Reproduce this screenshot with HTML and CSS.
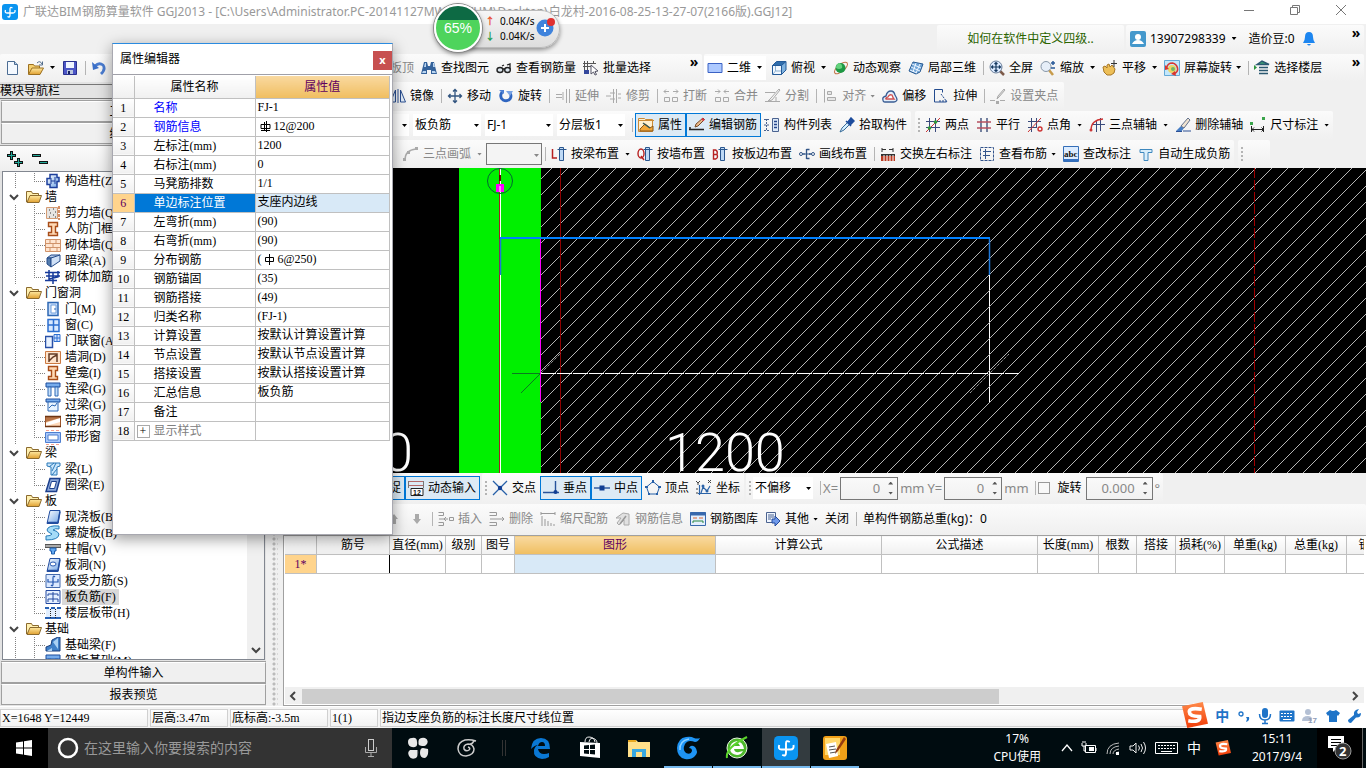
FILE: index.html
```html
<!DOCTYPE html>
<html lang="zh-CN">
<head>
<meta charset="utf-8">
<title>广联达BIM钢筋算量软件 GGJ2013</title>
<link rel="stylesheet" href="styles.css">
</head>
<body>
<svg class="defs" aria-hidden="true">
<defs>
<linearGradient id="gb" x1="0" y1="0" x2="1" y2="1"><stop offset="0" stop-color="#fff"/><stop offset="1" stop-color="#6fa4e6"/></linearGradient>
<linearGradient id="gy" x1="0" y1="0" x2="0" y2="1"><stop offset="0" stop-color="#ffe9a0"/><stop offset="1" stop-color="#e0a030"/></linearGradient>
<linearGradient id="go" x1="0" y1="0" x2="0" y2="1"><stop offset="0" stop-color="#ff8a4a"/><stop offset="1" stop-color="#f03c08"/></linearGradient>
</defs>
<symbol id="logo" viewBox="0 0 16 16"><rect width="16" height="16" rx="3" fill="#0a94f0"/><path d="M10.500 4Q8 2.500 8 5v6q0 3-2.500 1.500M3.500 6q-1 3 1.500 3h6q2.500 0 2-3" fill="none" stroke="#fff" stroke-width="1.300"/></symbol>
<symbol id="new" viewBox="0 0 16 16"><path d="M2.500 1.500h7l3 3v10h-10z" fill="#f4f9ff" stroke="#4b6c93"/><path d="M9.500 1.500v3h3" fill="#b8d0ec" stroke="#4b6c93"/></symbol>
<symbol id="open" viewBox="0 0 16 16"><path d="M.5 14V4.500h5l1 1.500h5v3" fill="#f4cf70" stroke="#9c7020"/><path d="M.5 14.500 4 8h11.500L12 14.500z" fill="url(#gy)" stroke="#9c7020"/><path d="M9 3q3-3 5 1M14.500 1.500V5H11" fill="none" stroke="#526d8c"/></symbol>
<symbol id="save" viewBox="0 0 16 16"><path d="M1.500 1.500h13v13h-13z" fill="#4c56c6" stroke="#2a318f"/><path d="M4 2h8v6H4z" fill="#f0f5ff"/><path d="M5 10h6v4H5z" fill="#b9c5df"/><path d="M6 11h2v3H6z" fill="#17205f"/></symbol>
<symbol id="undo" viewBox="0 0 16 16"><path d="M4 6q4-4 8-1 3 4-2 9" fill="none" stroke="#4a7cd0" stroke-width="2.800"/><path d="M1 2l1 8 6-2z" fill="#3c70c8"/></symbol>
<symbol id="binoc" viewBox="0 0 16 16"><path d="M3 2h3l1 4h2l1-4h3l3 12h-6v-4H6v4H0z" fill="#34629b"/><path d="M2 11h3v2H1zm9 0h3l1 2h-4zM4 3h1v4H3zm8 0h1l1 4h-2z" fill="#b9d4f0"/></symbol>
<symbol id="glasses" viewBox="0 0 16 16"><ellipse cx="4" cy="10" rx="3" ry="2.500" fill="#dce6ee" stroke="#222" stroke-width="1.400"/><ellipse cx="11.500" cy="10" rx="2.800" ry="2.500" fill="#dce6ee" stroke="#222" stroke-width="1.400"/><path d="M7 9h2M6 6l2-1M14 9V4l-3 1" fill="none" stroke="#222" stroke-width="1.300"/></symbol>
<symbol id="batch" viewBox="0 0 16 16"><path d="M1.500 1v13M4.500 1v13M0 3.500h13M0 6.500h8M10.500 1v3" fill="none" stroke="#555"/><path d="M1 10h5v4H1z" fill="#33469b"/><path d="M8 5l7 6-3 .5 1.500 3-1.500.5-1.500-3L8 14z" fill="#fff" stroke="#556"/></symbol>
<symbol id="rect2d" viewBox="0 0 16 16"><path d="M1 3.500h14v9H1z" fill="#adc9ff" stroke="#3b62c4"/></symbol>
<symbol id="cube" viewBox="0 0 16 16"><path d="M1.500 5.500h9v9h-9z" fill="#f2f8ff" stroke="#235a98"/><path d="M1.500 5.500 5.500 1.500h9.500l-4.500 4z" fill="#2f6dac" stroke="#235a98"/><path d="M10.500 5.500 15 1.500V10l-4.500 4.500z" fill="#7fb2df" stroke="#235a98"/><path d="M4.500 6v5L2 14M5 11h5" stroke="#8bb0d0" fill="none"/></symbol>
<symbol id="orbit" viewBox="0 0 16 16"><ellipse cx="8" cy="8" rx="8" ry="3.500" transform="rotate(-40 8 8)" fill="none" stroke="#c2774b"/><circle cx="7.500" cy="8" r="5" fill="#1d9844"/><path d="M6 3q4 1 3 5-3 2-6 0 0-4 3-5z" fill="#64d27c"/></symbol>
<symbol id="local3d" viewBox="0 0 16 16"><path d="M1 11 5 2l10 2-3 8-4 2z" fill="#72a6d8" stroke="#275a92"/><path d="M4 4l9 4M3 7l9 4M2 10l7 3M8 3 5 12M12 4 8 13" fill="none" stroke="#eaf4ff"/></symbol>
<symbol id="full" viewBox="0 0 16 16"><path d="M11 11l4 4" stroke="#7c5a49" stroke-width="2.500"/><circle cx="7" cy="7" r="6" fill="#dceaff" stroke="#6b7f9a"/><path d="M7 2.500v9M2.500 7h9M5.500 4 7 2.500 8.500 4M5.500 10 7 11.500 8.500 10M4 5.500 2.500 7 4 8.500M10 5.500 11.500 7 10 8.500" fill="none" stroke="#16395f" stroke-width="1.200"/></symbol>
<symbol id="zoomi" viewBox="0 0 16 16"><path d="M9 10l4 5" stroke="#c79b4a" stroke-width="2.500"/><circle cx="6" cy="6.500" r="5" fill="#e6eef8" stroke="#8797a8"/><path d="M13 1v4M11 3h4M11 8h4" stroke="#2a5a98" stroke-width="1.500"/></symbol>
<symbol id="pan" viewBox="0 0 16 16"><path d="M1 7l2-1 2 2V5l2-1 1 3 2-2 3 4-1 4-3 2H5L2 12z" fill="#edbf58" stroke="#a87725"/><path d="M12 0v7M9 3.500h6" stroke="#333"/></symbol>
<symbol id="scrrot" viewBox="0 0 16 16"><path d="M.5.500h15v15H.5z" fill="#c3e7fb" stroke="#64a9d7"/><circle cx="8" cy="9" r="4" fill="#edd565"/><path d="M2.500 8q1-5 6-5 4 1 5 5t-4 6" fill="none" stroke="#d93530" stroke-width="1.600"/><path d="M1 5l4 4-4 1zm11 11-5-2 4-3z" fill="#d93530"/><circle cx="9" cy="9" r="2" fill="#6eb66b"/></symbol>
<symbol id="floors" viewBox="0 0 16 16"><path d="M3 4.500 8 1l7 3.500zM5 7.500h9M5 10.500h9M5 13.500h9" fill="#3a9c74" stroke="#2a5870" stroke-width="1.500"/><path d="M0 5l3 2.500L0 10z" fill="#2b943b"/></symbol>
<symbol id="mirror" viewBox="0 0 16 16"><path d="M5.500 2v12H.5zM10.500 2v12h5z" fill="#e2edf9" stroke="#2a4f91"/><path d="M8 1v14" stroke="#2a4f91"/></symbol>
<symbol id="move" viewBox="0 0 16 16"><path d="M8 1.500v13M1.500 8h13M6 3.500l2-2 2 2M6 12.500l2 2 2-2M3.500 6l-2 2 2 2M12.500 6l2 2-2 2" fill="none" stroke="#31547f" stroke-width="1.300"/></symbol>
<symbol id="rot" viewBox="0 0 16 16"><path d="M4 4q-3 5 1 8 4 2 7-1 2-3 0-6" fill="none" stroke="#2f65c0" stroke-width="2.800"/><path d="M8 3h7l-3 5z" fill="#78a2e4"/><path d="M1 2h5v4z" fill="#4d80d4"/></symbol>
<symbol id="extend" viewBox="0 0 16 16"><path d="M1 6.500h6M1 9.500h6M8 4v8M11.500 1v14M14.500 1v14" fill="none" stroke="#aaa"/></symbol>
<symbol id="trim" viewBox="0 0 16 16"><path d="M0 8h5M7.500 1v14M10.500 1v14M4 5h5M4 11h5M12 6h3M12 10h3" fill="none" stroke="#aaa"/></symbol>
<symbol id="brk" viewBox="0 0 16 16"><path d="M1 3.500h5M10 3.500h5M3 1.500 1 3.500l2 2M13 1.500l2 2-2 2M1.500 9.500h5v4h-5zM9.500 9.500h5v4h-5z" fill="none" stroke="#aaa"/></symbol>
<symbol id="mrg" viewBox="0 0 16 16"><path d="M1 3.500h5M10 3.500h5M4 1.500l2 2-2 2M12 1.500l-2 2 2 2M1.500 9.500h5v4h-5zM9.500 9.500h5v4h-5z" fill="none" stroke="#aaa"/></symbol>
<symbol id="split" viewBox="0 0 16 16"><path d="M0 4.500h10M0 13.500h15M3 13l3-3 8-9 1 1-8 10zM11 9v4" fill="none" stroke="#aaa"/></symbol>
<symbol id="align" viewBox="0 0 16 16"><path d="M2.500 1v13.500M5.500 3.500h4v3h-4zM5.500 9.500h8v3h-8z" fill="#e5e5e5" stroke="#aaa"/></symbol>
<symbol id="offset" viewBox="0 0 16 16"><path d="M1 12q-1-3 3-4 1-5 5-5 3 0 4 4 2 3 2 5-1 2-3 2H3q-2 0-2-2z" fill="#e5effa" stroke="#3a5d94" stroke-width="1.300"/><path d="M4 11q-1-1 2-2 1-3 4-2 1 3 2 4z" fill="#fff" stroke="#d05050" stroke-width="1.300"/></symbol>
<symbol id="stretch" viewBox="0 0 16 16"><path d="M1.500 1.500h8v3M1.500 1.500v12.500h12" fill="none" stroke="#234b8e"/><path d="M8 6l6 8M6 13h8" stroke="#234b8e" stroke-dasharray="2 1"/></symbol>
<symbol id="grip" viewBox="0 0 16 16"><path d="M0 12.500h5M10 12.500h5M7 11l1-3 6-7 1 1-6 7z" fill="#ddd" stroke="#aaa"/><path d="M6 13h3v3H6z" fill="#aaa"/></symbol>
<symbol id="prop" viewBox="0 0 16 16"><path d="M.5 1.500h6l1 1h7v12H.5z" fill="#fff0d0" stroke="#cc8a36"/><path d="M0 3.500h16" stroke="#cc8a36"/><path d="M2 12l5-5 5 4 3-2v5H2z" fill="#f2a83c" stroke="#8a5616"/><path d="M5 6l7 5" stroke="#355" stroke-width="1.500"/></symbol>
<symbol id="editbar" viewBox="0 0 16 16"><path d="M0 12.500h15M1 10v3" stroke="#222" stroke-width="1.500"/><path d="M6 10l1-3 7-6 1.500 1.500L9 9z" fill="#e9b98a" stroke="#754c2b"/><path d="M13 1.500l2 2" stroke="#d34" stroke-width="2"/></symbol>
<symbol id="list" viewBox="0 0 16 16"><path d="M0 2.500h5M0 8h5M0 13.500h5M2.500 2v12" stroke="#4b6390" stroke-dasharray="2 1"/><path d="M8.500 1.500h6v13h-6z" fill="#dce9f8" stroke="#4b6390"/><path d="M10 4.500h3M10 7.500h3M10 10.500h3" stroke="#24458c" stroke-width="1.500"/></symbol>
<symbol id="pick" viewBox="0 0 16 16"><path d="M1 15l2-4 6-6 2 2-6 6z" fill="#d5efff" stroke="#386b98"/><path d="M7 4l5 5M9 5l3-4 3 3-3 3z" fill="#1d4c9c" stroke="#1d4c9c" stroke-width="1.500"/></symbol>
<symbol id="twopt" viewBox="0 0 16 16"><path d="M4.500 1v14M10.500 1v14M1 4.500h14M1 10.500h14" stroke="#394a7b"/><path d="M1 15 15 1" stroke="#c33"/><circle cx="4.500" cy="11" r="1.800" fill="#2c9b38"/><circle cx="10.500" cy="5" r="1.800" fill="#2c9b38"/></symbol>
<symbol id="para" viewBox="0 0 16 16"><path d="M5 1v14M11 1v14" stroke="#2f4270" stroke-width="1.300"/><path d="M1 5h14M1 11h14" stroke="#b65060" stroke-width="1.300"/></symbol>
<symbol id="ptang" viewBox="0 0 16 16"><path d="M4.500 1v14M9.500 1v10M1 4.500h13M1 10.500h9" stroke="#394a7b"/><path d="M1 15 14 1" stroke="#c33"/><circle cx="13" cy="12" r="2" fill="none" stroke="#c33" stroke-width="1.400"/></symbol>
<symbol id="three" viewBox="0 0 16 16"><path d="M7.500 3v12M11.500 1v13M4 7.500h12" stroke="#394a7b"/><path d="M2 13q0-10 12-11" fill="none" stroke="#c33" stroke-width="1.300"/><circle cx="2" cy="13" r="1.500" fill="#c33"/></symbol>
<symbol id="delax" viewBox="0 0 16 16"><path d="M1 14l5-5 3 2-3 4z" fill="#457dc4"/><path d="M6 9l7-8 2 2-6 8z" fill="#f0e3d0" stroke="#60708c"/><path d="M8 14h8M1 14.500h6" stroke="#2b4e94"/></symbol>
<symbol id="dim" viewBox="0 0 16 16"><path d="M1.500 9v6M13.500 9v6M2 12.500h12M4 10.500l-2 2 2 2M11.500 10.500l2 2-2 2" fill="none" stroke="#222"/><path d="M0 5h3v3H0zM12 0h3v3h-3z" fill="#3aa44b"/></symbol>
<symbol id="arc" viewBox="0 0 16 16"><path d="M2 14Q2 4 13 3" fill="none" stroke="#aaa" stroke-width="1.500"/><path d="M0 12h3v3H0zM4 5h3v3H4zM12 1h3v3h-3z" fill="#aaa"/></symbol>
<symbol id="tbar" viewBox="0 0 16 16"><path d="M6.500 3.500h9M8.500 1.500v13h4v-13z" fill="#bed9f5" stroke="#2a568e"/></symbol>
<symbol id="ltype" viewBox="0 0 16 16"><use href="#tbar"/><path d="M1.500 3v9h4.500" fill="none" stroke="#b72020" stroke-width="1.500"/></symbol>
<symbol id="qtype" viewBox="0 0 16 16"><use href="#tbar"/><ellipse cx="4" cy="7.500" rx="3" ry="4.500" fill="none" stroke="#b72020" stroke-width="1.400"/><path d="M4 10l3 4" stroke="#b72020" stroke-width="1.400"/></symbol>
<symbol id="btype" viewBox="0 0 16 16"><use href="#tbar"/><path d="M1.500 4v9h2q3-1 1.500-4.500Q6 5 3.500 4zM1.500 8.500H5" fill="none" stroke="#b72020" stroke-width="1.400"/></symbol>
<symbol id="drawln" viewBox="0 0 16 16"><path d="M2 8h4M10 8h4M7.500 3v10M7.500 3.500h3M7.500 12.500h3" fill="none" stroke="#315486" stroke-width="1.300"/><circle cx="2" cy="8" r="1.500" fill="#fff" stroke="#315486"/><circle cx="14" cy="8" r="1.500" fill="#fff" stroke="#315486"/><path d="M6 8h5" stroke="#315486"/></symbol>
<symbol id="swap" viewBox="0 0 16 16"><path d="M2 6V2M2 3.500h4M13 6V2M13 3.500H9" fill="none" stroke="#333"/><path d="M1 8h14v7H1z" fill="#333"/><path d="M1 10h14v5H1z" fill="#b93c24"/><path d="M4 9v6M7 9v6M10 9v6M13 9v6" stroke="#fff"/></symbol>
<symbol id="viewbar" viewBox="0 0 16 16"><path d="M1.500 1.500h13v13h-13z" fill="none" stroke="#34558c" stroke-dasharray="3 1"/><path d="M6.500 3v10M4 5.500h8M4 9.500h7" stroke="#34558c"/></symbol>
<symbol id="abc" viewBox="0 0 16 16"><path d="M.5.500h15v15H.5z" fill="#dcecff" stroke="#346eb8"/><path d="M0 14h16" stroke="#3470c0" stroke-width="2"/><text x="1" y="11" font-size="9" font-weight="700" font-family="Liberation Serif" fill="#111">abc</text></symbol>
<symbol id="auto" viewBox="0 0 16 16"><path d="M2 3.500h12v3h-4v8H6v-8H2z" fill="#d9eefb" stroke="#3e88be"/></symbol>
<symbol id="plus2" viewBox="0 0 16 16"><path d="M4.500 0v9M0 4.500h9M11.500 7v9M7 11.500h9" stroke="#111" stroke-width="3"/><path d="M4.500 1v7M1 4.500h7M11.500 8v7M8 11.500h7" stroke="#21a898"/></symbol>
<symbol id="minus2" viewBox="0 0 16 16"><path d="M0 4.500h9M7 11.500h9" stroke="#111" stroke-width="3"/><path d="M1 4.500h7M8 11.500h7" stroke="#21a898"/></symbol>
<symbol id="folder" viewBox="0 0 16 16"><path d="M.5 13V2.500h5l1 2h6v3" fill="#fff0b0" stroke="#8b6a2e"/><path d="M1 13.500 4 6.500h11.500L13 13.500z" fill="url(#gy)" stroke="#8b6a2e"/></symbol>
<symbol id="column" viewBox="0 0 16 16"><path d="M5 1.500h7v3h2v4h-2v6H5v-3H2v-6h3z" fill="url(#gb)" stroke="#1c3f9c" stroke-width="1.500"/><path d="M6 5v6M10 4v7M6 8h4" stroke="#1c3f9c"/></symbol>
<symbol id="wall" viewBox="0 0 16 16"><path d="M1.500 2.500h11v11h-11z" fill="#e7e4e1" stroke="#d59b73"/><path d="M14 1v14" stroke="#c66b36" stroke-width="1.500" stroke-dasharray="3 1"/><path d="M4 5h1M8 4h1M10 7h1M5 8h1M8 10h1M4 12h1M10 12h1" stroke="#333"/></symbol>
<symbol id="frame" viewBox="0 0 16 16"><path d="M3.500 1.500h9v4h-2v6h2v3h-9v-3h3v-6h-3z" fill="#ffd9b4" stroke="#a84c18" stroke-width="1.400"/></symbol>
<symbol id="brick" viewBox="0 0 16 16"><path d="M.5 2.500h15v12H.5zM.5 6.500h15M.5 10.500h15M5 3v3M11 3v3M8 7v3M5 11v3M12 11v3" fill="#ffe5d0" stroke="#d0936a"/></symbol>
<symbol id="beam" viewBox="0 0 16 16"><path d="M2 5l4-3h9l-4 3z" fill="#b7cceb" stroke="#244b89"/><path d="M2 5h4v9l-4-3z" fill="#547cad" stroke="#244b89"/><path d="M6 5l9-3v6l-9 6z" fill="#cfe0f6" stroke="#244b89"/></symbol>
<symbol id="rebarw" viewBox="0 0 16 16"><path d="M0 3.500h15M0 11.500h12M4 1v9l9-2V2M8 3v12M1 7h14" fill="none" stroke="#173b9b" stroke-width="1.500"/></symbol>
<symbol id="door" viewBox="0 0 16 16"><path d="M3 1.500h10v13H3z" fill="#c8defb" stroke="#2e68b4" stroke-width="1.500"/><path d="M6 4h5v8H6z" fill="#fff" stroke="#70a0dc"/><path d="M9 8h2" stroke="#2e68b4"/></symbol>
<symbol id="window" viewBox="0 0 16 16"><path d="M3 2.500h11v12H3zM8.500 3v11M3 8h11" fill="#d8e9ff" stroke="#2c6fd0" stroke-width="1.500"/></symbol>
<symbol id="dw" viewBox="0 0 16 16"><path d="M.5 3.500h7v11h-7z" fill="#e8f2ff" stroke="#284fa6" stroke-width="1.500"/><path d="M9 1.500h6v7H9zM12 2v6M9 5h6" fill="#cfe1ff" stroke="#2c6fd0"/></symbol>
<symbol id="hole" viewBox="0 0 16 16"><path d="M.5 2.500h15v12H.5z" fill="#ffe4cc" stroke="#cc7a42"/><path d="M4 13V5h8v8M4 12l4-4 4-2" fill="none" stroke="#643b25" stroke-width="1.500"/></symbol>
<symbol id="lbeam" viewBox="0 0 16 16"><path d="M1 2h14v4H1z" fill="#76acec" stroke="#1d4c9c"/><path d="M3 6h3v9H3zm7 0h3v9h-3z" fill="#c3defa" stroke="#2e68b4"/></symbol>
<symbol id="gbeam" viewBox="0 0 16 16"><path d="M1 2h14v3H1z" fill="#76acec" stroke="#1d4c9c"/><path d="M3 5h10v9H3z" fill="#e8f4ff" stroke="#2e68b4"/><path d="M4 11l3-3 3 1 2-3" fill="none" stroke="#2e68b4"/></symbol>
<symbol id="strip" viewBox="0 0 16 16"><path d="M.5 3.500h15v10H.5z" fill="#ffd9b8" stroke="#9b542a"/><path d="M1 10 15 5v4L1 13z" fill="#fff"/><path d="M1 9 15 5v-1H1z" fill="#b87447"/><path d="M0 3.500h16M0 13.500h16" stroke="#6e3512" stroke-width="1.500"/></symbol>
<symbol id="swin" viewBox="0 0 16 16"><path d="M.5 3.500h15v10H.5z" fill="#a9c8fa" stroke="#4d7ed0"/><path d="M3 6h10v5H3z" fill="#fff" stroke="#4d7ed0"/><path d="M1 1.500h14M1 15.500h14" stroke="#f4a090" stroke-dasharray="3 2"/></symbol>
<symbol id="beaml" viewBox="0 0 16 16"><path d="M2 2h13v3l-3 1v8H6V6L2 5z" fill="#c9e6fc" stroke="#2b79b8"/><path d="M4 6 9 2M7 10l4-8M7 14l5-6" stroke="#2b79b8"/></symbol>
<symbol id="ring" viewBox="0 0 16 16"><path d="M5 1.500h10L11.500 14.500H1z" fill="#8ba8da" stroke="#1c3f8c" stroke-width="1.500"/><path d="M6.500 4.500h5L9.500 11.500H4.500z" fill="#fff" stroke="#1c3f8c"/></symbol>
<symbol id="slab" viewBox="0 0 16 16"><path d="M5 1.500h10L13 14.500H2z" fill="url(#gb)" stroke="#234ea0"/><path d="M2 13.500h11l2-11" fill="none" stroke="#234ea0" stroke-width="1.500"/></symbol>
<symbol id="spiral" viewBox="0 0 16 16"><path d="M14 1Q3 0 2 5q0 2 5 4-1 2-6 2v4q13 0 13-6-1-3-6-4 2-2 6-1z" fill="#a5dcf8" stroke="#267bb8"/></symbol>
<symbol id="cap" viewBox="0 0 16 16"><path d="M0 3.500h16v3H0z" fill="#aaa" stroke="#555"/><path d="M5 7h6v3H9.500v3h-3v-3H5z" fill="#63a8f0" stroke="#1e5dac"/></symbol>
<symbol id="slabh" viewBox="0 0 16 16"><use href="#slab"/><ellipse cx="8" cy="7" rx="3" ry="2" fill="#fff" stroke="#2457b0"/></symbol>
<symbol id="sforce" viewBox="0 0 16 16"><path d="M1 1.500h14v13H1z" fill="#dbe9ff" stroke="#456bad"/><path d="M10 4q-2-2-2 1v6q0 3-2 1M3 6v3h10V6" fill="none" stroke="#2457b0" stroke-width="1.200"/></symbol>
<symbol id="sneg" viewBox="0 0 16 16"><path d="M1 1.500h14v13H1z" fill="#e5f0ff" stroke="#2349a0"/><path d="M3 5h10M3 10h10M3 5v2M13 5v2M3 10v3M13 10v3M8 3v10" fill="none" stroke="#2349a0"/></symbol>
<symbol id="sband" viewBox="0 0 16 16"><path d="M1 3h14v10H1z" fill="#e2efff"/><path d="M0 13h16M0 3h4M6 3h4M12 3h4" stroke="#2861b4" stroke-width="2"/><path d="M5.500 4v9M10.500 4v9" stroke="#222" stroke-dasharray="1 1"/></symbol>
<symbol id="fbeam" viewBox="0 0 16 16"><path d="M1 14V10l5-2 1-5 6-3h2v14z" fill="#4080c8" stroke="#1b3f7c"/><path d="M2 14l5-3v3zM8 5l5-4v11z" fill="#a9d0f4"/></symbol>
<symbol id="dyn" viewBox="0 0 16 16"><path d="M0 1.500h16M0 5.500h16" stroke="#b46a6a"/><path d="M.5 1v7M15.500 1v7" stroke="#777"/><path d="M3 8.500h12v7H3z" fill="#fff" stroke="#222"/><text x="5" y="15" font-size="7" font-weight="700" font-family="Liberation Sans" fill="#111">12</text></symbol>
<symbol id="cross" viewBox="0 0 16 16"><path d="M1 1l14 14M15 1 1 15" stroke="#2760a8" stroke-width="1.300"/><circle cx="8" cy="8" r="2.200" fill="#113f94"/></symbol>
<symbol id="perp" viewBox="0 0 16 16"><path d="M12.500 1v11M0 12.500h16" stroke="#26539c" stroke-width="1.400"/><circle cx="12.500" cy="12" r="2" fill="#113f94"/></symbol>
<symbol id="mid" viewBox="0 0 16 16"><path d="M0 8h16" stroke="#26539c" stroke-width="1.400"/><path d="M5.500 5.500h5v5h-5z" fill="#113f94"/></symbol>
<symbol id="penta" viewBox="0 0 16 16"><path d="M8 1.500 14.500 7l-2.500 7H4L1.500 7z" fill="none" stroke="#2760a8"/><path d="M7 0h2v3H7zM0 6h3v2H0zM13 6h3v2h-3zM3 13h2v2H3zM11 13h2v2h-2z" fill="#2760a8"/></symbol>
<symbol id="coord" viewBox="0 0 16 16"><path d="M3.500 15V5M2 13.500h13M5 13l2-6 4 4 3-5" fill="none" stroke="#2b63a8" stroke-width="1.200"/><path d="M0 1l2 2 2-2M2 3v2M12 0l3 3M15 0l-3 3M0 9h2M0 13h2" stroke="#444" fill="none"/><circle cx="7" cy="6" r="1.500" fill="#2b63a8"/><circle cx="11" cy="11" r="1.500" fill="#2b63a8"/></symbol>
<symbol id="up" viewBox="0 0 16 16"><path d="M8 3l4 5H10v5H6V8H4z" fill="#aaa"/></symbol>
<symbol id="down" viewBox="0 0 16 16"><path d="M8 13l4-5H10V3H6v5H4z" fill="#aaa"/></symbol>
<symbol id="ins" viewBox="0 0 16 16"><path d="M.5 1.500h5v3H.5M.5 11.500h5v3H.5M1 8h9M8 6l-2 2 2 2M11.500 6.500h4v3h-4z" fill="none" stroke="#999"/></symbol>
<symbol id="del" viewBox="0 0 16 16"><path d="M.5 1.500h7v3H.5M.5 11.500h7v3H.5M1 8h14M13 6l2 2-2 2" fill="none" stroke="#999"/></symbol>
<symbol id="scale" viewBox="0 0 16 16"><path d="M1 1v3M1 2.500h14M15 1v3M2 5v10M5 8v7M8 10v5M11 12v3M14 13v2" fill="none" stroke="#999"/></symbol>
<symbol id="info" viewBox="0 0 16 16"><path d="M1 7 8 2l6 1v11H9V9l-5 5-2-2 4-5z" fill="#e1e1e1" stroke="#aaa"/><path d="M5 13l6-8" stroke="#999" stroke-width="1.500"/></symbol>
<symbol id="lib" viewBox="0 0 16 16"><path d="M.5 1.500h15v13H.5z" fill="#e4effd" stroke="#3868ac"/><path d="M0 3h16" stroke="#3868ac" stroke-width="3"/><path d="M3 7h4M9 7h4" stroke="#d63"/><path d="M3 12v-2h10v2" fill="none" stroke="#2a8740"/></symbol>
<symbol id="other" viewBox="0 0 16 16"><path d="M1.500 1.500h9v10h-9z" fill="#f0f6ff" stroke="#4b6390"/><path d="M3 4h6M3 6h6M3 8h3" stroke="#4b6390"/><path d="M7 8h3V5l5 5-5 5v-3H7z" fill="#6f99ea" stroke="#234a9c"/></symbol>
<symbol id="sogou" viewBox="0 0 26 26"><path d="M1 4 21 0l5 21L6 25z" fill="url(#go)"/><path d="M20 7Q8 5 8 9.500t10 4.500q1 6-11 4" fill="none" stroke="#fff" stroke-width="3.500"/></symbol>
<symbol id="chev" viewBox="0 0 10 10"><path d="M1 3l4 4 4-4" fill="none" stroke="#444" stroke-width="2"/></symbol>
</svg>

<div class="desktop">
<header class="top">
<div class="titlebar"><svg class="ic"><use href="#logo"/></svg><h1>广联达BIM钢筋算量软件 GGJ2013 - [C:\Users\Administrator.PC-20141127MWQMKHM\Desktop\白龙村-2016-08-25-13-27-07(2166版).GGJ12]</h1>
<div class="winbtns"><button aria-label="最小化"><svg width="12" height="12"><path d="M1 6.500h10" stroke="#777"/></svg></button><button aria-label="还原"><svg width="12" height="12"><path d="M1.500 3.500h7v7h-7zM3.500 3V1.500h7v7H9" fill="none" stroke="#777"/></svg></button><button aria-label="关闭"><svg width="12" height="12"><path d="M1 1l10 10M11 1 1 11" stroke="#777"/></svg></button></div></div>
<div class="userrow"><div class="bar tip"><a href="#tip">如何在软件中定义四级..</a></div>
<div class="bar user"><button class="tool"><svg class="ic" viewBox="0 0 16 16"><rect width="16" height="16" rx="2" fill="#4498cc"/><circle cx="8" cy="6" r="3" fill="#fff"/><path d="M2 13q2-4 6-4t6 4z" fill="#fff"/></svg>13907298339<i class="arr wide"></i></button><span class="bean">造价豆:0</span><svg class="ic" viewBox="0 0 16 16"><path d="M8 1q4 0 4 5 0 3 2 6H2q2-3 2-6 0-5 4-5zM6 13h4q-2 3-4 0z" fill="#1d86f0"/></svg><button class="more">»</button></div></div>
<div class="mainrow"><div class="bar main1"><button class="tool"><svg class="ic"><use href="#new"/></svg></button><button class="tool"><svg class="ic"><use href="#open"/></svg><i class="arr wide"></i></button><button class="tool"><svg class="ic"><use href="#save"/></svg></button><i class="sep"></i><button class="tool"><svg class="ic"><use href="#undo"/></svg></button>
<button class="tool dis push">板顶</button><button class="tool"><svg class="ic"><use href="#binoc"/></svg>查找图元</button><button class="tool"><svg class="ic"><use href="#glasses"/></svg>查看钢筋量</button><button class="tool"><svg class="ic"><use href="#batch"/></svg>批量选择</button><button class="more far">»</button></div>
<div class="bar main2"><button class="tool white"><svg class="ic"><use href="#rect2d"/></svg>二维<i class="arr wide"></i></button><button class="tool"><svg class="ic"><use href="#cube"/></svg>俯视<i class="arr wide"></i></button><button class="tool"><svg class="ic"><use href="#orbit"/></svg>动态观察</button><button class="tool"><svg class="ic"><use href="#local3d"/></svg>局部三维</button><i class="sep"></i><button class="tool"><svg class="ic"><use href="#full"/></svg>全屏</button><button class="tool"><svg class="ic"><use href="#zoomi"/></svg>缩放<i class="arr wide"></i></button><button class="tool"><svg class="ic"><use href="#pan"/></svg>平移<i class="arr wide"></i></button><button class="tool"><svg class="ic"><use href="#scrrot"/></svg>屏幕旋转<i class="arr"></i></button><i class="sep"></i><button class="tool"><svg class="ic"><use href="#floors"/></svg>选择楼层</button><button class="more">»</button></div></div>
</header>

<main class="work">
<nav class="nav">
<h2>模块导航栏</h2>
<button class="mod">工程设置</button><button class="mod">绘图输入</button>
<div class="navtools"><button class="tool" aria-label="展开"><svg class="ic"><use href="#plus2"/></svg></button><button class="tool" aria-label="折叠"><svg class="ic"><use href="#minus2"/></svg></button></div>
<div class="tree"><ul>
<li class="leaf last"><svg class="ic"><use href="#column"/></svg><span>构造柱(Z)</span></li>
<li class="dir"><svg class="ch"><use href="#chev"/></svg><svg class="ic"><use href="#folder"/></svg><span>墙</span></li>
<li class="leaf"><svg class="ic"><use href="#wall"/></svg><span>剪力墙(Q)</span></li>
<li class="leaf"><svg class="ic"><use href="#frame"/></svg><span>人防门框墙(RF)</span></li>
<li class="leaf"><svg class="ic"><use href="#brick"/></svg><span>砌体墙(Q)</span></li>
<li class="leaf"><svg class="ic"><use href="#beam"/></svg><span>暗梁(A)</span></li>
<li class="leaf last"><svg class="ic"><use href="#rebarw"/></svg><span>砌体加筋(Y)</span></li>
<li class="dir"><svg class="ch"><use href="#chev"/></svg><svg class="ic"><use href="#folder"/></svg><span>门窗洞</span></li>
<li class="leaf"><svg class="ic"><use href="#door"/></svg><span>门(M)</span></li>
<li class="leaf"><svg class="ic"><use href="#window"/></svg><span>窗(C)</span></li>
<li class="leaf"><svg class="ic"><use href="#dw"/></svg><span>门联窗(A)</span></li>
<li class="leaf"><svg class="ic"><use href="#hole"/></svg><span>墙洞(D)</span></li>
<li class="leaf"><svg class="ic"><use href="#frame"/></svg><span>壁龛(I)</span></li>
<li class="leaf"><svg class="ic"><use href="#lbeam"/></svg><span>连梁(G)</span></li>
<li class="leaf"><svg class="ic"><use href="#gbeam"/></svg><span>过梁(G)</span></li>
<li class="leaf"><svg class="ic"><use href="#strip"/></svg><span>带形洞</span></li>
<li class="leaf last"><svg class="ic"><use href="#swin"/></svg><span>带形窗</span></li>
<li class="dir"><svg class="ch"><use href="#chev"/></svg><svg class="ic"><use href="#folder"/></svg><span>梁</span></li>
<li class="leaf"><svg class="ic"><use href="#beaml"/></svg><span>梁(L)</span></li>
<li class="leaf last"><svg class="ic"><use href="#ring"/></svg><span>圈梁(E)</span></li>
<li class="dir"><svg class="ch"><use href="#chev"/></svg><svg class="ic"><use href="#folder"/></svg><span>板</span></li>
<li class="leaf"><svg class="ic"><use href="#slab"/></svg><span>现浇板(B)</span></li>
<li class="leaf"><svg class="ic"><use href="#spiral"/></svg><span>螺旋板(B)</span></li>
<li class="leaf"><svg class="ic"><use href="#cap"/></svg><span>柱帽(V)</span></li>
<li class="leaf"><svg class="ic"><use href="#slabh"/></svg><span>板洞(N)</span></li>
<li class="leaf"><svg class="ic"><use href="#sforce"/></svg><span>板受力筋(S)</span></li>
<li class="leaf"><svg class="ic"><use href="#sneg"/></svg><span class="cur">板负筋(F)</span></li>
<li class="leaf last"><svg class="ic"><use href="#sband"/></svg><span>楼层板带(H)</span></li>
<li class="dir"><svg class="ch"><use href="#chev"/></svg><svg class="ic"><use href="#folder"/></svg><span>基础</span></li>
<li class="leaf"><svg class="ic"><use href="#fbeam"/></svg><span>基础梁(F)</span></li>
<li class="leaf"><svg class="ic"><use href="#lbeam"/></svg><span>筏板基础(M)</span></li>
</ul><div class="vscroll"><svg class="ch"><use href="#chev"/></svg></div></div>
<button class="mod">单构件输入</button><button class="mod">报表预览</button>
</nav>
<div class="splitter"></div>

<section class="right">
<div class="trow"><div class="bar r2"><button class="tool"><svg class="ic"><use href="#mirror"/></svg>镜像</button><i class="sep"></i><button class="tool"><svg class="ic"><use href="#move"/></svg>移动</button><button class="tool"><svg class="ic"><use href="#rot"/></svg>旋转</button><i class="sep"></i><button class="tool dis"><svg class="ic"><use href="#extend"/></svg>延伸</button><button class="tool dis"><svg class="ic"><use href="#trim"/></svg>修剪</button><i class="sep"></i><button class="tool dis"><svg class="ic"><use href="#brk"/></svg>打断</button><button class="tool dis"><svg class="ic"><use href="#mrg"/></svg>合并</button><button class="tool dis"><svg class="ic"><use href="#split"/></svg>分割</button><i class="sep"></i><button class="tool dis"><svg class="ic"><use href="#align"/></svg>对齐<i class="arr"></i></button><button class="tool"><svg class="ic"><use href="#offset"/></svg>偏移</button><button class="tool"><svg class="ic"><use href="#stretch"/></svg>拉伸</button><i class="sep"></i><button class="tool dis"><svg class="ic"><use href="#grip"/></svg>设置夹点</button></div></div>
<div class="trow"><div class="bar r3"><span class="combo"><select aria-label="构件大类"><option>板</option></select><i class="arr"></i></span><span class="combo"><select aria-label="构件类型"><option>板负筋</option></select><i class="arr"></i></span><span class="combo"><select aria-label="构件名称"><option>FJ-1</option></select><i class="arr"></i></span><span class="combo"><select aria-label="分层板"><option>分层板1</option></select><i class="arr"></i></span><i class="sep"></i><button class="tool on"><svg class="ic"><use href="#prop"/></svg>属性</button><button class="tool on"><svg class="ic"><use href="#editbar"/></svg>编辑钢筋</button><button class="tool"><svg class="ic"><use href="#list"/></svg>构件列表</button><button class="tool"><svg class="ic"><use href="#pick"/></svg>拾取构件</button></div>
<div class="bar"><i class="dots"></i><button class="tool"><svg class="ic"><use href="#twopt"/></svg>两点</button><button class="tool"><svg class="ic"><use href="#para"/></svg>平行</button><button class="tool"><svg class="ic"><use href="#ptang"/></svg>点角<i class="arr wide"></i></button><button class="tool"><svg class="ic"><use href="#three"/></svg>三点辅轴<i class="arr wide"></i></button><button class="tool"><svg class="ic"><use href="#delax"/></svg>删除辅轴</button><button class="tool"><svg class="ic"><use href="#dim"/></svg>尺寸标注<i class="arr wide"></i></button></div></div>
<div class="trow"><div class="bar r4"><button class="tool dis"><svg class="ic"><use href="#arc"/></svg>三点画弧<i class="arr wide"></i></button><span class="combo boxed dis"><select disabled aria-label="画弧方式"><option></option></select><i class="arr"></i></span><i class="sep"></i><button class="tool"><svg class="ic"><use href="#ltype"/></svg>按梁布置<i class="arr wide"></i></button><button class="tool"><svg class="ic"><use href="#qtype"/></svg>按墙布置</button><button class="tool"><svg class="ic"><use href="#btype"/></svg>按板边布置</button><button class="tool"><svg class="ic"><use href="#drawln"/></svg>画线布置</button><i class="sep"></i><button class="tool"><svg class="ic"><use href="#swap"/></svg>交换左右标注</button><button class="tool"><svg class="ic"><use href="#viewbar"/></svg>查看布筋<i class="arr"></i></button><button class="tool"><svg class="ic"><use href="#abc"/></svg>查改标注</button><button class="tool"><svg class="ic"><use href="#auto"/></svg>自动生成负筋</button></div><div class="bar stub"><i class="dots"></i></div></div>

<div class="canvas"><svg width="100%" height="100%">
<defs><pattern id="hatch" width="16" height="16" patternUnits="userSpaceOnUse"><path d="M0 16 16 0" stroke="#b4b4b4" fill="none" shape-rendering="crispEdges"/></pattern></defs>
<g transform="translate(-283 -168)">
<path d="M541 168h1400v900H541z" fill="url(#hatch)"/>
<text x="383" y="471" class="dimtext">0</text><text x="665" y="471" class="dimtext">1200</text>
<path d="M459 168h82v900h-82z" fill="#00f000"/>
<path d="M499.500 168v900" stroke="#a02020"/><path d="M500.500 168v900" stroke="#fff"/>
<path d="M560.500 168v900" stroke="#900000" /><path d="M1254.500 168v900" stroke="#a00000" stroke-dasharray="10 2"/>
<circle cx="500" cy="181" r="12.500" fill="none" stroke="#063"/><path d="M500 175v6" stroke="#600" stroke-width="2"/><path d="M496 184h8v8h-8z" fill="#f0f"/><path d="M500 186v6" stroke="#fff"/>
<path d="M541 373.500h478M989.500 275v128" stroke="#fff" stroke-dasharray="15 1" fill="none"/><path d="M541 373l20-20M970 393l39-39" stroke="#ddd" stroke-dasharray="1 1"/>
<path d="M540.500 239v163" stroke="#f0f"/><path d="M512 373.500h28M521 393l19-19" stroke="#0a7a20"/>
<path d="M500.500 275V239M989.500 239v36" stroke="#1f78d8" stroke-width="1.500" fill="none"/><path d="M500 238h490" stroke="#0080ff" stroke-width="2"/>
</g></svg></div>

<div class="trow snap"><div class="bar s1"><button class="tool on">捕捉</button><button class="tool on"><svg class="ic"><use href="#dyn"/></svg>动态输入</button></div>
<div class="bar"><i class="dots"></i><button class="tool"><svg class="ic"><use href="#cross"/></svg>交点</button><button class="tool on"><svg class="ic"><use href="#perp"/></svg>垂点</button><button class="tool on"><svg class="ic"><use href="#mid"/></svg>中点</button><button class="tool"><svg class="ic"><use href="#penta"/></svg>顶点</button><button class="tool"><svg class="ic"><use href="#coord"/></svg>坐标</button></div>
<div class="bar"><i class="dots"></i><span class="combo short"><select aria-label="偏移方式"><option>不偏移</option></select><i class="arr"></i></span><i class="sep"></i><label class="spin">X=<span class="num"><input value="0" disabled><i class="su"></i><i class="sd"></i></span>mm</label><label class="spin">Y=<span class="num"><input value="0" disabled><i class="su"></i><i class="sd"></i></span>mm</label><i class="sep"></i><label class="check"><input type="checkbox" disabled>旋转</label><label class="spin"><span class="num big"><input value="0.000" aria-label="旋转角度" disabled><i class="su"></i><i class="sd"></i></span>°</label></div></div>
<div class="trow edit"><div class="bar e1"><button class="tool dis" aria-label="上移"><svg class="ic"><use href="#up"/></svg></button><button class="tool dis" aria-label="下移"><svg class="ic"><use href="#down"/></svg></button><i class="sep"></i><button class="tool dis"><svg class="ic"><use href="#ins"/></svg>插入</button><button class="tool dis"><svg class="ic"><use href="#del"/></svg>删除</button><button class="tool dis"><svg class="ic"><use href="#scale"/></svg>缩尺配筋</button><button class="tool dis"><svg class="ic"><use href="#info"/></svg>钢筋信息</button><button class="tool"><svg class="ic"><use href="#lib"/></svg>钢筋图库</button><button class="tool"><svg class="ic"><use href="#other"/></svg>其他<i class="arr"></i></button><button class="tool">关闭</button><i class="sep"></i><span class="total">单构件钢筋总重(kg)：0</span></div></div>

<div class="grid">
<div class="gridview"><table>
<colgroup><col class="c32"><col class="c73"><col class="c56"><col class="c36"><col class="c33"><col class="c201"><col class="c166"><col class="c156"><col class="c61"><col class="c38"><col class="c39"><col class="c49"><col class="c61"><col class="c61"><col class="c72"></colgroup>
<thead><tr><th></th><th>筋号</th><th>直径(mm)</th><th>级别</th><th>图号</th><th class="hot">图形</th><th>计算公式</th><th>公式描述</th><th>长度(mm)</th><th>根数</th><th>搭接</th><th>损耗(%)</th><th>单重(kg)</th><th>总重(kg)</th><th>钢筋归类</th></tr></thead>
<tbody><tr><th class="rowhot">1*</th><td class="edge"></td><td></td><td></td><td></td><td class="sel"></td><td></td><td></td><td></td><td></td><td></td><td></td><td></td><td></td><td></td></tr></tbody></table></div>
<div class="hscroll"><svg class="ch left"><use href="#chev"/></svg><i class="thumb"></i><svg class="ch rightc"><use href="#chev"/></svg></div>
</div>
</section>
</main>

<footer class="status"><span class="w1">X=1648 Y=12449</span><span class="w2">层高:3.47m</span><span class="w3">底标高:-3.5m</span><span class="w4">1(1)</span><span class="w5">指边支座负筋的标注长度尺寸线位置</span></footer>

<div class="taskbar">
<button class="start" aria-label="开始"><svg width="16" height="16"><path d="M0 2.500 7 1.500V7.500H0zM8 1.300 16 0v7.500H8zM0 8.500h7v6L0 13.500zM8 8.500h8V16l-8-1.300z" fill="#fff"/></svg></button>
<label class="search"><svg width="22" height="22"><circle cx="11" cy="11" r="9" fill="none" stroke="#fff" stroke-width="2.500"/></svg><input placeholder="在这里输入你要搜索的内容"><svg width="12" height="18"><rect x="3.500" y=".5" width="5" height="11" fill="none" stroke="#ccc"/><path d="M.5 8v5.500h11V8M6 14v3.500M3 17.500h6" fill="none" stroke="#aaa"/></svg></label>
<div class="apps">
<button class="app"><svg width="22" height="22"><g fill="#e8e8e8"><path d="M1 5q0-4 4-4 5-1 5 4 1 4-2 5Q1 11 1 5zM11 4q2-4 7-3 4 2 2 6-2 3-6 2-4-1-3-5zM21 12q1 7-3 9-5 0-5-5 0-5 3-5zM11 13q1 6-2 8-5 2-7-2-2-4 1-6z"/></g><path d="M11 1v8l9 1M11 20v-8L2 11" stroke="#000c10" fill="none"/></svg></button>
<button class="app"><svg width="22" height="22"><path d="M20 4q-6-2-11-1-7 2-7 9 1 7 8 7 8-1 8-7-1-5-6-5-5 1-4 5 2 3 5 1 2-2-1-3M18 3q-1 4-4 4" fill="none" stroke="#ccc" stroke-width="1.500"/></svg></button>
<i class="tsep"></i>
<button class="app"><svg width="22" height="22"><path d="M1 12Q2 1 11 1q9 0 9 11H8q1 5 6 5 3 0 5-1v4q-3 2-7 2Q3 21 4 13q1-4 4-5-3 0-7 4zM8 9h7q0-4-3-4t-4 4z" fill="#0a78d4" fill-rule="evenodd"/></svg></button>
<button class="app"><svg width="22" height="24"><path d="M1 6l20 1v15L1 20z" fill="#fff"/><path d="M6 6q0-5 4-5 5 0 6 5M10 6q0-3 3-4 5 1 5 5" fill="none" stroke="#eee"/><path d="M5 9.500l5-.5v4H5zM11 9l5-.5V13h-5zM5 14h5v4l-5-.5zM11 14h5v4.500l-5-.5z" fill="#000c10"/></svg></button>
<button class="app"><svg width="22" height="20"><path d="M0 2h8l2 2h12v15H0z" fill="#ffe08a"/><path d="M0 2h8v2H0z" fill="#e8a820"/><path d="M4 11h14v8h-4v-5H8v5H4z" fill="#38a8e0"/></svg></button>
<button class="app run"><svg width="24" height="24"><path d="M24 2q-2 4-5 4-7-3-10 2-3 6 1 9 5 2 6-2 0-3-3-3 2-4 6-1 4 5 0 9-4 4-10 3-8-2-8-11Q2 2 10 1q5-1 8 1 3 1 6 0z" fill="#1e94f4"/><path d="M4 14Q3 5 13 3" stroke="#8cd0ff" fill="none" stroke-width="1.500"/></svg></button>
<button class="app run"><svg width="24" height="24"><circle cx="12" cy="12" r="10" fill="#4db82c" stroke="#e6f5df"/><path d="M5 13q0-7 7-8 6 1 7 8H9q1 4 5 3l4-1q-2 4-6 4-7-1-7-6zM9 10h6q-1-3-3-3t-3 3z" fill="#fff" fill-rule="evenodd"/><path d="M2 22Q0 12 22 1" fill="none" stroke="#5ad42c" stroke-width="2"/></svg></button>
<button class="app run active"><svg width="24" height="24"><use href="#logo"/></svg></button>
<button class="app run"><svg width="24" height="24"><rect width="24" height="24" rx="3" fill="#f0a018"/><path d="M2 2h15v17H2z" fill="#ffd76a"/><path d="M3 8l10-2 2 14-9 2z" fill="#fff"/><path d="M6 11l6-1M6 14l7-1M7 17l6-1" stroke="#555"/><path d="M21 1l-8 13-1 4 3-3L23 3z" fill="#963c10"/></svg></button>
</div>
<div class="tray"><div class="cpu">17%<br>CPU使用</div>
<svg width="12" height="16"><path d="M1 11l5-6 5 6" fill="none" stroke="#fff" stroke-width="1.300"/></svg>
<svg width="16" height="16"><path d="M4.500 5.500h10v7h-10zM15 8v3" fill="none" stroke="#fff"/><path d="M8 7h5v4H8z" fill="#fff"/><path d="M1 3v3h4V3M2 3V1M4 3V1M3 6v5h2" fill="none" stroke="#fff"/></svg>
<svg width="16" height="16"><path d="M2 14Q2 4 14 3M5 14q0-7 9-8M8 14q0-4 6-5M11 14q0-2 3-2" fill="none" stroke="#bbb"/><path d="M11 12h3v3h-3z" fill="#fff"/></svg>
<svg width="18" height="16"><path d="M1 6h3l3-3v10L4 10H1zM9.500 5.500q2 2.500 0 5M12 4q3 4 0 8M14.500 2q4 6 0 12" fill="none" stroke="#eee"/></svg>
<svg width="24" height="16"><path d="M.5 2.500h22v11H.5z" fill="none" stroke="#fff"/><path d="M3 5.500h17M3 8.500h17" stroke="#fff" stroke-dasharray="2 1"/><path d="M6 11.500h11" stroke="#fff"/></svg>
<span class="ime">中</span>
<svg width="16" height="16"><use href="#sogou"/></svg>
<div class="clock">15:11<br>2017/9/4</div>
<button class="notice" aria-label="通知"><svg width="26" height="26"><path d="M1 1h16v12h-7l-4 4v-4H1z" fill="#fff"/><path d="M4 4.500h10M4 7.500h10M4 10.500h6" stroke="#000"/><circle cx="16" cy="16" r="8" fill="#333" stroke="#999"/><text x="12" y="21" font-size="13" font-weight="700" font-family="Noto Sans" fill="#fff">2</text></svg></button></div>
</div>

<section class="dialog" aria-label="属性编辑器"><header><h2>属性编辑器</h2><button class="close" aria-label="关闭">x</button></header>
<table><colgroup><col class="k1"><col class="k2"><col></colgroup>
<thead><tr><th></th><th>属性名称</th><th class="hot">属性值</th></tr></thead><tbody>
<tr><th>1</th><td class="blue">名称</td><td>FJ-1</td></tr>
<tr><th>2</th><td class="blue">钢筋信息</td><td><svg class="rebar" width="14" height="11" role="img" aria-label="三级钢"><path d="M5.500 1v9M7.500 0v11M2 3.500h9v4H2zM2 9.500h9" fill="none" stroke="#000"/></svg>12@200</td></tr>
<tr><th>3</th><td>左标注(mm)</td><td>1200</td></tr>
<tr><th>4</th><td>右标注(mm)</td><td>0</td></tr>
<tr><th>5</th><td>马凳筋排数</td><td>1/1</td></tr>
<tr class="picked"><th>6</th><td>单边标注位置</td><td>支座内边线</td></tr>
<tr><th>7</th><td>左弯折(mm)</td><td>(90)</td></tr>
<tr><th>8</th><td>右弯折(mm)</td><td>(90)</td></tr>
<tr><th>9</th><td>分布钢筋</td><td>(<svg class="rebar" width="14" height="11" role="img" aria-label="一级钢"><path d="M6.500 0v11M2.500 3.500h8v4h-8z" fill="none" stroke="#000"/></svg>6@250)</td></tr>
<tr><th>10</th><td>钢筋锚固</td><td>(35)</td></tr>
<tr><th>11</th><td>钢筋搭接</td><td>(49)</td></tr>
<tr><th>12</th><td>归类名称</td><td>(FJ-1)</td></tr>
<tr><th>13</th><td>计算设置</td><td>按默认计算设置计算</td></tr>
<tr><th>14</th><td>节点设置</td><td>按默认节点设置计算</td></tr>
<tr><th>15</th><td>搭接设置</td><td>按默认搭接设置计算</td></tr>
<tr><th>16</th><td>汇总信息</td><td>板负筋</td></tr>
<tr><th>17</th><td>备注</td><td></td></tr>
<tr><th>18</th><td class="grp"><button aria-label="展开">+</button>显示样式</td><td></td></tr>
</tbody></table></section>

<aside class="meter"><div class="pill"><p><b class="upc">↑</b>0.04K/s</p><p><b class="dnc">↓</b>0.04K/s</p><svg class="boost" width="20" height="22"><circle cx="9" cy="12" r="8.500" fill="#3f83dc"/><path d="M9 8v8M5 12h8" stroke="#fff" stroke-width="2"/><circle cx="15" cy="6" r="4" fill="#e03030"/></svg></div><div class="ball">65%</div></aside>

<aside class="imebar"><svg width="27" height="27"><use href="#sogou"/></svg><b>中</b><svg width="14" height="16"><circle cx="4" cy="6" r="2" fill="none" stroke="#1f74c8" stroke-width="1.300"/><path d="M9 9h3q1 4-3 5l1-3z" fill="#1f74c8"/></svg><svg width="14" height="18"><rect x="4" y="1" width="6" height="10" rx="3" fill="#1f74c8"/><path d="M1.500 7q0 6 5.500 6t5.500-6M7 13v4M4 16.500h6" fill="none" stroke="#1f74c8" stroke-width="1.500"/></svg><svg width="16" height="14"><rect x=".5" y="1.500" width="15" height="11" rx="1" fill="#1f74c8"/><path d="M2 4.500h12M2 7.500h12" stroke="#fff" stroke-dasharray="2 1"/><path d="M4 10.500h8" stroke="#fff"/></svg><svg width="16" height="16"><circle cx="6" cy="4" r="3" fill="#b4c0d4"/><path d="M0 13q0-5 6-5 3 0 4 2v3z" fill="#b4c0d4"/><text x="6" y="15" font-size="8" font-weight="700" font-family="Liberation Sans" fill="#8d9cb8">17</text></svg><svg width="14" height="14"><path d="M4 1q3 2 6 0l4 3-2 3-1-1v7H3V6L2 7 0 4z" fill="#1f74c8"/></svg><svg width="15" height="15"><path d="M1 12 7 7q-1-5 5-6L10 4l1 2 3-1q0 5-5 4.500L4 15q-3 0-3-3z" fill="#1f74c8"/></svg></aside>
</div>
</body>
</html>
```
FILE: styles.css
```css
* { box-sizing: border-box; }
body { margin: 0; font: 12px/16px "Noto Sans", "Noto Sans CJK SC", sans-serif; color: #000; background: #f0f0f0; }
button, input, select { font: inherit; color: inherit; margin: 0; padding: 0; border: 0; background: none; }
h1, h2, p, ul { margin: 0; padding: 0; font-size: 12px; font-weight: 400; }
ul { list-style: none; }
i, b { font-style: normal; }
.defs { position: absolute; width: 0; height: 0; }
.desktop { position: relative; height: 100vh; display: flex; flex-direction: column; overflow: hidden; }
.ic { width: 16px; height: 16px; flex: none; }
.ch { width: 10px; height: 10px; flex: none; }

.titlebar { height: 24px; background: #fff; display: flex; align-items: center; padding: 0 2px; gap: 5px; color: #999; white-space: nowrap; }
.winbtns { margin-left: auto; display: flex; height: 20px; }
.winbtns button { width: 46px; }
.userrow, .mainrow { display: flex; height: 29px; padding: 1px 2px 1px 0; gap: 2px; }
.userrow { justify-content: flex-end; }
.bar { display: flex; align-items: center; background: linear-gradient(#fbfbfb, #f0f0f0); border-radius: 2px; white-space: nowrap; }
.tip { width: 187px; justify-content: center; }
.tip a { color: #2b6400; text-decoration: none; }
.user { width: 238px; padding-left: 1px; }
.bean { margin: 0 6px 0 8px; }
.more { width: 16px; height: 24px; font-size: 14px; font-weight: 700; line-height: 12px; padding-bottom: 12px; margin-left: auto; }
.far { margin-left: 31px; }
.main1 { flex: 0 0 702px; padding-left: 2px; }
.main2 { flex: 1; }
.push { margin-left: auto; }
.tool { height: 24px; display: flex; align-items: center; gap: 4px; padding: 0 3px 0 2px; border: 1px solid transparent; white-space: nowrap; flex: none; }
.tool.on { background: #dceaf5; border-color: #0078d7; }
.dis { color: #888; }
.white { background: #fff; margin-right: 2px; }
.arr { width: 5px; height: 3px; flex: none; background: currentColor; clip-path: polygon(0 0, 100% 0, 50% 100%); }
.wide { margin-left: 2px; }
.sep { width: 1px; height: 14px; background: #b4b4b4; margin: 0 2px 0 3px; flex: none; }
.dots { width: 2px; height: 14px; margin: 0 2px 0 3px; flex: none; background: repeating-linear-gradient(#b4b4b4 0 2px, transparent 2px 4px); }

.work { flex: 1; min-height: 0; display: flex; }
.nav { width: 266px; flex: none; display: flex; flex-direction: column; padding: 2px 0 1px; font-family: "Liberation Serif", "Noto Sans CJK SC", serif; background: #e3e3e3; }
.nav h2 { height: 15px; line-height: 13px; border: 1px solid #777; border-left: 0; margin-bottom: 1px; }
.mod { height: 21px; border: 1px solid #a0a0a0; border-top-color: #fff; background: #f0f0f0; box-shadow: 0 -1px #a0a0a0; margin: 1px 0 0 1px; flex: none; line-height: 16px; }
.navtools { height: 26px; flex: none; display: flex; align-items: center; padding-left: 4px; gap: 2px; background: linear-gradient(#fbfbfb, #eee); border-top: 1px solid #999; margin-top: 1px; }
.tree { flex: 1; min-height: 0; margin: 0 1px 1px 2px; border: 1px solid #828790; background: #fff; display: flex; overflow: hidden; }
.tree ul { flex: 1; min-width: 0; padding-top: 1px; overflow: hidden; }
.tree li { height: 16px; display: flex; align-items: center; white-space: nowrap; }
.leaf { padding-left: 42px; --h: 100%; background: repeating-linear-gradient(#808080 0 1px, transparent 1px 2px) 12px 0 / 1px 100% no-repeat, repeating-linear-gradient(#808080 0 1px, transparent 1px 2px) 31px 0 / 1px var(--h) no-repeat, repeating-linear-gradient(90deg, #808080 0 1px, transparent 1px 2px) 31px 8px / 11px 1px no-repeat; }
.last { --h: 9px; }
.dir { padding-left: 6px; }
.dir .ic { margin: 0 0 0 7px; }
.tree span { padding: 0 3px; line-height: 16px; }
.leaf span { margin-left: 1px; }
.cur { background: #d9d9d9; }
.vscroll { width: 17px; background: #f0f0f0; display: flex; flex-direction: column; justify-content: flex-end; align-items: center; padding-bottom: 4px; }
.splitter { width: 17px; flex: none; background: radial-gradient(circle at 2px 2px, #bbb 0 1px, transparent 2px) 6px 0 / 5px 5px repeat; background-clip: content-box; padding: 0 5px; }

.right { flex: 1; min-width: 0; display: flex; flex-direction: column; }
.trow { height: 28px; flex: none; display: flex; gap: 4px; margin-bottom: 1px; }
.r2 { padding: 0 2px 0 104px; }
.r3 { padding-left: 58px; }
.r4 { padding-left: 117px; }
.stub { width: 32px; }
.combo { position: relative; width: 68px; height: 22px; background: #fff; margin-right: 4px; flex: none; }
.combo select { appearance: none; width: 100%; height: 100%; padding-left: 2px; outline: 0; }
.combo .arr { position: absolute; right: 2px; top: 10px; }
.short { width: 60px; }
.boxed { width: 56px; border: 1px solid #777; background: #f4f4f4; margin-right: 0; }
.canvas { flex: 1; min-height: 0; background: #000; overflow: hidden; margin-top: -1px; }
.canvas svg { display: block; }
.dimtext { font: 300 54px Roboto, sans-serif; fill: #fff; }
.snap { height: 30px; margin: 0; gap: 2px; }
.s1 { padding-left: 91px; }
.spin { display: flex; align-items: center; gap: 2px; color: #888; font-size: 13px; margin-right: 3px; }
.num { position: relative; width: 58px; height: 23px; border: 1px solid #777; display: block; }
.num input { width: 100%; height: 100%; text-align: right; padding-right: 17px; }
.big { width: 67px; }
.su, .sd { position: absolute; right: 4px; width: 5px; height: 3px; background: #555; }
.su { top: 4px; clip-path: polygon(50% 0, 100% 100%, 0 100%); }
.sd { bottom: 4px; clip-path: polygon(0 0, 100% 0, 50% 100%); }
.check { display: flex; align-items: center; gap: 8px; margin-right: 4px; }
.check input { appearance: none; width: 12px; height: 12px; border: 1px solid #999; background: #f8f8f8; }
.edit { height: 32px; margin: 0; padding: 1px 0; }
.e1 { flex: 1; padding-left: 100px; }
.total { margin-left: 4px; }

table { border-collapse: collapse; table-layout: fixed; font-family: "Liberation Serif", "Noto Sans CJK SC", serif; }
th { font-weight: 400; background: linear-gradient(#fff, #f0f0f0); }
th, td { border: 1px solid #c0c0c0; padding: 0; white-space: nowrap; overflow: hidden; line-height: 16px; }
.hot { background: linear-gradient(#f9d9a0, #f0be60); color: #600060; }
.grid { height: 171px; flex: none; background: #fff; border: 1px solid #a0a0a0; border-right: 0; padding: 0 2px 1px 1px; display: flex; flex-direction: column; font-family: "Liberation Serif", "Noto Sans CJK SC", serif; }
.gridview { flex: 1; overflow: hidden; }
.grid table { width: 1134px; margin: -1px 0 0 -1px; }
.grid tr { height: 19px; }
.rowhot { background: #ffd48c; color: #600060; }
.sel { background: #d8e9f7; }
.edge { border-right-color: #000; }
.c32 { width: 32px; } .c33 { width: 33px; } .c36 { width: 36px; } .c38 { width: 38px; } .c39 { width: 39px; }
.c49 { width: 49px; } .c56 { width: 56px; } .c61 { width: 61px; } .c72 { width: 72px; } .c73 { width: 73px; }
.c156 { width: 156px; } .c166 { width: 166px; } .c201 { width: 201px; }
.hscroll { height: 17px; display: flex; align-items: center; background: #f0f0f0; padding: 1px 4px 0 3px; gap: 4px; }
.thumb { width: 65%; height: 15px; background: #cdcdcd; }
.left { transform: rotate(90deg); }
.rightc { transform: rotate(-90deg); margin-left: auto; }

.status { height: 22px; flex: none; display: flex; gap: 2px; padding: 2px 0 1px; background: #f4f4f4; border-top: 1px solid #fff; font-family: "Liberation Serif", "Noto Sans CJK SC", serif; }
.status span { border: 1px solid #d0d0d0; padding-left: 1px; line-height: 17px; white-space: nowrap; background: linear-gradient(#fff, #f2f2f2); }
.w1 { width: 148px; } .w2 { width: 78px; } .w3 { width: 98px; } .w4 { width: 48px; } .w5 { flex: 1; }

.taskbar { height: 40px; flex: none; display: flex; background: #000c10; color: #fff; }
.start { width: 48px; background: #000; display: grid; place-items: center; }
.search { width: 344px; background: #333; display: flex; align-items: center; padding: 0 15px 0 9px; gap: 5px; }
.search input { flex: 1; min-width: 0; font-size: 14px; line-height: 20px; }
.search input::placeholder { color: #999; opacity: 1; }
.apps { display: flex; padding-left: 2px; gap: 1px; align-items: stretch; }
.app { width: 48px; display: grid; place-items: center; border-bottom: 2px solid transparent; padding-top: 2px; }
.run { border-bottom-color: #76b9ed; background-clip: padding-box; }
.active { background-color: #333b3f; }
.tsep { width: 4px; height: 16px; margin: 12px 10px 0; border: 1px solid #333; border-width: 0 1px; }
.tray { margin-left: auto; display: flex; align-items: center; gap: 8px; text-align: center; line-height: 18px; }
.cpu { margin-right: 12px; }
.ime { font-size: 14px; margin-right: 6px; }
.clock { width: 64px; margin-left: 6px; }
.notice { width: 46px; height: 40px; display: grid; place-items: center; background: #000; border-right: 1px solid #666; margin-right: 3px; }

.dialog { position: absolute; left: 112px; top: 43px; width: 281px; height: 492px; background: #fff; border: 1px solid #a8a8b0; border-top-color: #2a8be0; box-shadow: 0 4px 14px rgba(0,0,0,.4); }
.dialog header { height: 31px; border-bottom: 1px solid #a0a0a8; display: flex; justify-content: space-between; align-items: center; padding-left: 7px; margin-bottom: 1px; }
.close { width: 19px; height: 19px; background: #c75050; color: #fff; font-weight: 700; font-size: 11px; line-height: 16px; margin-top: 2px; }
.dialog table { width: 277px; }
.dialog tr { height: 19px; }
.dialog thead tr { height: 22px; }
.dialog thead th { border-top: 0; }
.dialog th:first-child { border-left: 0; }
.k1 { width: 21px; } .k2 { width: 121px; }
.dialog td { padding-left: 2px; line-height: 15px; }
.dialog td:nth-child(2) { padding-left: 19px; padding-top: 2px; }
.blue { color: #00f; }
.picked th { background: #ffd48c; color: #600060; }
.picked td { background: #d8e9f7; }
.picked td:nth-child(2) { background: #0078d7; color: #fff; }
.rebar { vertical-align: -2px; margin: 0 1px; }
.dialog td.grp { color: #808080; padding-left: 2px; }
.grp button { width: 13px; height: 13px; border: 1px solid #aaa; background: #fff; color: #000; line-height: 10px; margin-right: 4px; }

.meter { position: absolute; left: 434px; top: 4px; width: 128px; height: 50px; }
.pill { position: absolute; left: 20px; top: 6px; width: 106px; height: 38px; border-radius: 19px; background: linear-gradient(#f6f6f6, #ddd); border: 1px solid #bbb; box-shadow: 0 2px 4px rgba(0,0,0,.4); padding: 3px 0 0 30px; font-size: 10px; line-height: 15px; }
.pill p { font-size: 10px; }
.pill b { display: inline-block; width: 15px; }
.upc { color: #e8512f; } .dnc { color: #1f9c50; }
.boost { position: absolute; right: 3px; top: 5px; }
.ball { position: absolute; left: 0; top: 0; width: 48px; height: 48px; border-radius: 50%; background: linear-gradient(#0d6a44 0 32%, #4ed45c 32% 100%); border: 2px solid #fff; box-shadow: 0 0 0 1px #888, 0 2px 5px rgba(0,0,0,.5); color: #fff; font: 14px/44px "Liberation Sans", sans-serif; text-align: center; }
.imebar { position: absolute; right: 0; top: 703px; height: 25px; width: 185px; display: flex; align-items: center; justify-content: space-between; padding-right: 4px; background: linear-gradient(90deg, transparent 12px, #fff 12px); color: #1f74c8; font-size: 14px; }
```
